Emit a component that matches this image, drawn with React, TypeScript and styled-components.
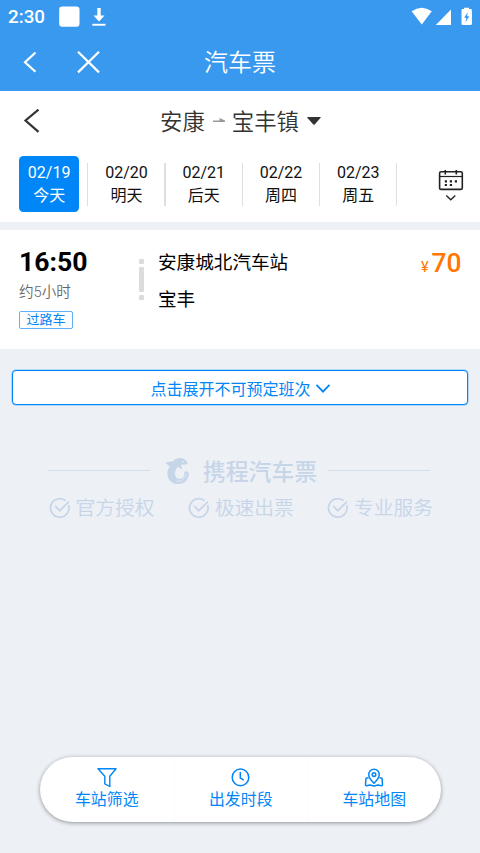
import React from "react";
import styled, { createGlobalStyle } from "styled-components";

const BLUE = "#0086f6";

const GlobalStyle = createGlobalStyle`
  * { box-sizing: border-box; }
  body { margin: 0; background: #edf1f6; font-family: Roboto, "Noto Sans CJK SC", sans-serif; }
`;

const Page = styled.div`
  width: 480px;
  height: 853px;
  display: flex;
  flex-direction: column;
  background: #edf1f6;
  overflow: hidden;
`;

const Header = styled.header`
  height: 91px;
  background: #3999ef;
  color: #fff;
  flex: none;
`;

const StatusBar = styled.div`
  height: 33px;
  display: flex;
  align-items: center;
  padding: 0 8px;
`;

const Clock = styled.span`
  width: 51px;
  font-size: 18.8px;
  line-height: 22px;
  font-weight: 500;
  padding-top: 1px;
`;

const StatusIcons = styled.div`
  display: flex;
  margin-left: auto;
`;

const NavBar = styled.div`
  height: 58px;
  display: grid;
  grid-template-columns: 160px 160px 160px;
  align-items: center;
`;

const NavButtons = styled.div`
  display: flex;
  padding: 0 0 1px 20px;
  gap: 38px;
`;

const NavTitle = styled.h1`
  margin: 0;
  padding-top: 2px;
  font-size: 24px;
  line-height: 30px;
  font-weight: 350;
  text-align: center;
`;

const SearchPanel = styled.section`
  height: 131px;
  background: #fff;
  flex: none;
`;

const RouteRow = styled.div`
  height: 60px;
  display: grid;
  grid-template-columns: 160px 1fr;
  align-items: center;
`;

const BackCell = styled.div`
  display: flex;
  padding-left: 19px;
`;

const Route = styled.div`
  display: flex;
  align-items: center;
  color: #333;
  font-size: 22.4px;
  line-height: 30px;
  font-weight: 350;
  span { padding-top: 2px; }
`;

const RouteArrow = styled.svg`
  margin: 0 7px 0 8px;
`;

const Caret = styled.svg`
  margin-left: 8px;
`;

const DateStrip = styled.div`
  display: flex;
  height: 66px;
  padding: 5px 0 0 10.5px;
`;

const DateCell = styled.div`
  width: 77.3px;
  display: flex;
  justify-content: center;
  position: relative;
  &::after {
    content: "";
    position: absolute;
    right: -0.5px;
    top: 7px;
    width: 1.4px;
    height: 43px;
    background: #dedfe1;
  }
`;

const DateBox = styled.div<{ $active?: boolean }>`
  width: 60px;
  height: 56px;
  padding-top: 6px;
  border-radius: 4.5px;
  text-align: center;
  font-size: 16px;
  line-height: 22px;
  white-space: nowrap;
  background: ${(p) => (p.$active ? BLUE : "transparent")};
  color: ${(p) => (p.$active ? "#fff" : "#111")};
  div + div { padding-top: 1px; }
`;

const CalendarButton = styled.div`
  flex: 1;
  display: flex;
  justify-content: center;
  padding: 12px 0 0 25px;
`;

const TripCard = styled.section`
  margin-top: 8px;
  height: 119px;
  flex: none;
  background: #fff;
  display: grid;
  padding: 0 18.5px 0 19px;
  grid-template-columns: 118px 21px 1fr auto;
`;

const TimeColumn = styled.div`
  padding-top: 16px;
  display: flex;
  flex-direction: column;
  align-items: flex-start;
`;

const Departure = styled.div`
  font-size: 26.6px;
  line-height: 32px;
  font-weight: 700;
  color: #000;
`;

const Duration = styled.div`
  margin-top: 4px;
  font-size: 14.6px;
  line-height: 20px;
  font-weight: 350;
  color: #666;
`;

const Tag = styled.div`
  margin-top: 9px;
  height: 18px;
  width: 54px;
  border: 1px solid #5eb2f9;
  border-radius: 2px;
  color: ${BLUE};
  font-size: 13px;
  line-height: 16px;
  text-align: center;
`;

const StopMarks = styled.div`
  padding: 29px 0 0 2px;
  display: flex;
  flex-direction: column;
  gap: 3px;
`;

const Mark = styled.i<{ $h: number }>`
  display: block;
  width: 5px;
  height: ${(p) => p.$h}px;
  border-radius: 1px;
  background: #dcdcdc;
`;

const Stations = styled.div`
  padding-top: 19px;
`;

const Station = styled.div`
  font-size: 18.6px;
  line-height: 28px;
  margin-bottom: 8.5px;
  color: #000;
`;

const Price = styled.div`
  padding-top: 17px;
  color: #ff7700;
  font-size: 26.4px;
  line-height: 32px;
  font-weight: 500;
  small {
    font-size: 14.5px;
    font-weight: 400;
    margin-right: 3px;
  }
`;

const ExpandButton = styled.button`
  margin: 21px 12px 0;
  height: 35px;
  flex: none;
  padding: 0 0 0 1px;
  border: 1.5px solid ${BLUE};
  box-shadow: 0 0 0 0.5px rgba(0, 134, 246, 0.5);
  border-radius: 4px;
  background: #fff;
  color: ${BLUE};
  font: inherit;
  font-size: 16px;
  line-height: 24px;
  display: flex;
  align-items: center;
  justify-content: center;
  gap: 4px;
  span { padding-top: 4px; }
`;

const BrandRow = styled.div`
  margin: 51px 50px 0 48px;
  height: 30px;
  display: flex;
  align-items: center;
  color: #c7d5e8;
`;

const Rule = styled.i`
  width: 102px;
  height: 1px;
  margin-bottom: 1px;
  background: #d3deec;
`;

const BrandName = styled.div`
  margin: 3px 11px 0 12px;
  font-size: 22.8px;
  line-height: 30px;
  font-weight: 500;
`;

const Dolphin = styled.svg`
  margin-left: 15px;
`;

const Promises = styled.div`
  margin: 6px 0 0 48px;
  display: flex;
  color: #c7d5e8;
`;

const Assurance = styled.div`
  width: 139.2px;
  display: flex;
  align-items: center;
  gap: 3.5px;
  font-size: 19.8px;
  line-height: 28px;
  font-weight: 350;
  white-space: nowrap;
  span { padding-top: 3px; }
  svg { margin-top: 1px; }
`;

const BottomBar = styled.nav`
  margin: auto 39.5px 31.5px 40px;
  height: 64.5px;
  flex: none;
  display: grid;
  grid-template-columns: repeat(3, 1fr);
  border-radius: 33px;
  background: #fff;
  box-shadow: 0 1px 4px rgba(0, 0, 0, 0.4);
`;

const BottomItem = styled.div`
  display: flex;
  flex-direction: column;
  align-items: center;
  padding-top: 10px;
  color: ${BLUE};
  font-size: 15.9px;
  line-height: 22px;
  & + & { border-left: 1px solid #fafbfc; }
  span { padding-top: 1px; }
`;

const dates = [
  ["02/19", "今天"],
  ["02/20", "明天"],
  ["02/21", "后天"],
  ["02/22", "周四"],
  ["02/23", "周五"],
];

const CheckCircle = () => (
  <svg width="24" height="24" viewBox="0 0 24 24" fill="none" stroke="currentColor" strokeWidth="1.8" strokeLinecap="round">
    <path d="M20.900 10A9.300 9.300 0 1 1 17 4.200" />
    <path d="M7.700 10.500l4 4.200 8.800-8.500" />
  </svg>
);

const Funnel = () => (
  <svg width="22" height="21" viewBox="0 0 22 21" fill="none" stroke="currentColor" strokeWidth="1.4" strokeLinejoin="round">
    <path d="M2 1.800h18l-6.200 7.400v10.300l-5-2.700V9.200z" />
  </svg>
);

const ClockIcon = () => (
  <svg width="22" height="21" viewBox="0 0 22 21" fill="none" stroke="currentColor" strokeWidth="1.5" strokeLinecap="round">
    <circle cx="10.500" cy="10.400" r="8.300" />
    <path d="M10.300 5.500v5.300l3 2" />
  </svg>
);

const MapPin = () => (
  <svg width="22" height="21" viewBox="0 0 22 21" fill="none" stroke="currentColor" strokeWidth="1.5" strokeLinecap="round" strokeLinejoin="round">
    <path d="M11 16.200C7.600 12.900 5.700 10.100 5.700 7.500a5.300 5.300 0 0 1 10.600 0c0 2.600-1.900 5.400-5.300 8.700z" />
    <circle cx="11" cy="7.600" r="1.800" />
    <path d="M5 11H3.800q-.8 0-.9.800l-.4 6q0 1 1 .9l3.500-.6 4 .8 4-.8 3.500.6q1 .1 1-.9l-.4-6q-.1-.8-.9-.8H17" />
  </svg>
);

export default function App() {
  return (
    <>
      <GlobalStyle />
      <Page>
        <Header>
          <StatusBar>
            <Clock>2:30</Clock>
            <svg width="50" height="24" viewBox="0 0 50 24" fill="#fff">
              <rect x="0.200" y="1.500" width="20.300" height="20.300" rx="3" />
              <path d="M38.300 3h3.400v7.500h3.800L40 16.500l-5.500-6h3.800z" />
              <rect x="33.300" y="18.800" width="13.200" height="1.900" />
            </svg>
            <StatusIcons>
              <svg width="62" height="20" viewBox="0 0 62 20" fill="#fff">
                <path d="M1.600 4.300Q11.700-2.700 21.800 4.300L11.800 17.500z" />
                <path d="M41 2.500v15.400H25.800z" />
                <path fillRule="evenodd" d="M54 2V.7h5V2h1.700a1.200 1.200 0 0 1 1.200 1.200v13.500a1.200 1.200 0 0 1-1.200 1.200h-8a1.200 1.200 0 0 1-1.200-1.200V3.200A1.200 1.200 0 0 1 52.700 2zM57.800 5.200l-3.700 5.500h2.200l-.8 4.600 3.800-6h-2.200z" />
              </svg>
            </StatusIcons>
          </StatusBar>
          <NavBar>
            <NavButtons>
              <svg width="18" height="24" viewBox="0 0 18 24" fill="none" stroke="#fff" strokeWidth="2.200">
                <path d="M15.500 2.500L5 12.200l10.500 9.500" />
              </svg>
              <svg width="26" height="24" viewBox="0 0 26 24" fill="none" stroke="#fff" strokeWidth="2.200">
                <path d="M2 1.700l21 20.700M23 1.700L2 22.400" />
              </svg>
            </NavButtons>
            <NavTitle>汽车票</NavTitle>
          </NavBar>
        </Header>

        <SearchPanel>
          <RouteRow>
            <BackCell>
              <svg width="22" height="26" viewBox="0 0 22 26" fill="none" stroke="#333" strokeWidth="2.200">
                <path d="M19.500 1.700L6.500 12.500l13 11.300" />
              </svg>
            </BackCell>
            <Route>
              <span>安康</span>
              <RouteArrow width="12" height="6" viewBox="0 0 12 6" fill="#999">
                <path d="M0 2.500h6.500V0L12 2.500v1.500H0z" />
              </RouteArrow>
              <span>宝丰镇</span>
              <Caret width="14" height="8" viewBox="0 0 14 8" fill="#333">
                <path d="M.8 0h12.400q1 0 .4.800L7.700 7.500q-.7.600-1.400 0L.3.800Q0 0 .8 0z" />
              </Caret>
            </Route>
          </RouteRow>
          <DateStrip>
            {dates.map(([date, day], i) => (
              <DateCell key={date}>
                <DateBox $active={i === 0}>
                  <div>{date}</div>
                  <div>{day}</div>
                </DateBox>
              </DateCell>
            ))}
            <CalendarButton>
              <svg width="26" height="36" viewBox="0 0 26 36" fill="none" stroke="#222" strokeWidth="1.600">
                <rect x="1.600" y="3.700" width="22.700" height="17.700" rx="1.500" />
                <path d="M1.600 8.500h22.700" strokeWidth="1.200" />
                <path d="M7.300 2v4.500M18.300 2v4.500" />
                <path d="M6.800 13.300h2.200M11.800 13.300h2.200M16.800 13.300h2.200M6.800 17h2.200M11.800 17h2.200" strokeWidth="2.200" />
                <path d="M8.300 27.500l4.500 4.300 4.500-4.300" strokeWidth="1.300" />
              </svg>
            </CalendarButton>
          </DateStrip>
        </SearchPanel>

        <TripCard>
          <TimeColumn>
            <Departure>16:50</Departure>
            <Duration>约5小时</Duration>
            <Tag>过路车</Tag>
          </TimeColumn>
          <StopMarks>
            <Mark $h={5} />
            <Mark $h={25} />
            <Mark $h={5} />
          </StopMarks>
          <Stations>
            <Station>安康城北汽车站</Station>
            <Station>宝丰</Station>
          </Stations>
          <Price><small>¥</small>70</Price>
        </TripCard>

        <ExpandButton>
          <span>点击展开不可预定班次</span>
          <svg width="16" height="10" viewBox="0 0 16 10" fill="none" stroke="currentColor" strokeWidth="1.800">
            <path d="M1.500 1.900L8 8.600l6.500-6.700" />
          </svg>
        </ExpandButton>

        <BrandRow>
          <Rule />
          <Dolphin width="26" height="28" viewBox="0 0 26 28" fill="currentColor">
            <path d="M.2 6.500C2.600 4.700 5.400 4.200 7.600 4.600 9.300 2.300 12 .9 15.200 1c4.100.1 6.300 2.300 7 4.400.6.500.8 1.100.3 1.600-1.200.7-2.700.7-4.500.6-1 0-1.700.2-2.200.6 1.100 1.200 1.500 2.800 1 4.300-1.300-1.700-2.700-2.600-4.300-2.600-2.200 2.500-3 5.500-2.300 8.300.7 2.400 2.600 3.900 4.900 3.600 3.200-.4 4.700-3.200 4-6.600l2.200-1.300 2.500 1.800C24.400 21.300 20 26.900 13.400 27.100 6.200 27.200 1.600 21.600 2.400 15.200c.3-2.500 1.200-4.300 2.100-5.800C3.400 8 1.800 7 .2 6.500z" />
            <path d="M11.500 24.300c4.800.7 8.700-2.300 9.700-7.800" fill="none" stroke="#edf1f6" strokeWidth=".7" />
            <circle cx="18.200" cy="4.700" r=".7" fill="#edf1f6" />
          </Dolphin>
          <BrandName>携程汽车票</BrandName>
          <Rule />
        </BrandRow>
        <Promises>
          {["官方授权", "极速出票", "专业服务"].map((label) => (
            <Assurance key={label}><CheckCircle /><span>{label}</span></Assurance>
          ))}
        </Promises>

        <BottomBar>
          <BottomItem><Funnel /><span>车站筛选</span></BottomItem>
          <BottomItem><ClockIcon /><span>出发时段</span></BottomItem>
          <BottomItem><MapPin /><span>车站地图</span></BottomItem>
        </BottomBar>
      </Page>
    </>
  );
}
